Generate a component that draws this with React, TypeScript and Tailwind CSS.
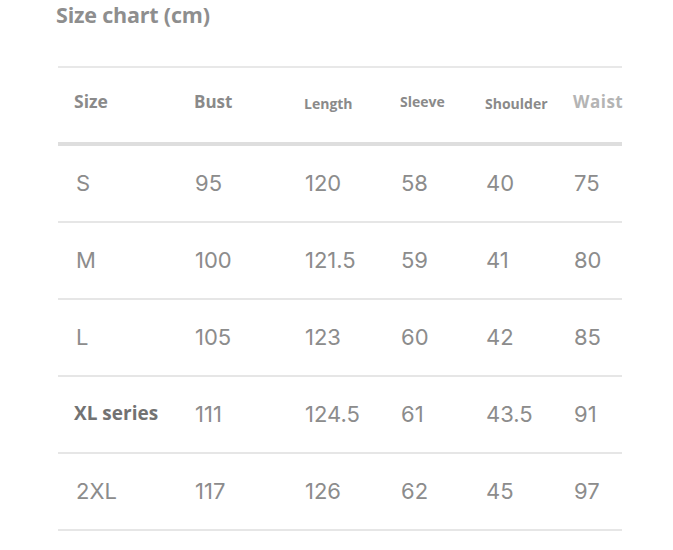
import React from "react";

const rows = [
  { size: "S", vals: ["95", "120", "58", "40", "75"] },
  { size: "M", vals: ["100", "121.5", "59", "41", "80"] },
  { size: "L", vals: ["105", "123", "60", "42", "85"] },
  { size: "XL series", vals: ["111", "124.5", "61", "43.5", "91"], bold: true },
  { size: "2XL", vals: ["117", "126", "62", "45", "97"] },
];

const cols = "grid grid-cols-[120px_110px_96px_85px_88px_1fr] items-center pl-4";

export default function App() {
  return (
    <div className="w-[673px] h-[550px] bg-white overflow-hidden font-['Open_Sans',sans-serif]">
      <div className="pl-[56px] pt-[1px] text-[21.5px] font-bold text-[#8e8e8e] leading-[28px] tracking-[-0.2px]">
        Size chart (cm)
      </div>
      <div className="ml-[58px] w-[564px] mt-[37px]">
        <div className="h-[2px] bg-[#e8e8e8]" />
        <div className={`${cols} h-[74px] pb-[7px] font-bold text-[#8a8a8a]`}>
          <span className="text-[17.5px]">Size</span>
          <span className="text-[17px]">Bust</span>
          <span className="text-[14px] pt-[3px]">Length</span>
          <span className="text-[14px]">Sleeve</span>
          <span className="text-[14px] pt-[3px]">Shoulder</span>
          <span className="text-[17px] text-[#b4b4b4] tracking-[0.5px]">Waist</span>
        </div>
        <div className="h-[4px] bg-[#dedede]" />
        {rows.map((r) => (
          <div key={r.size}>
            <div className={`${cols} h-[75px] font-['Inter',sans-serif] text-[22px] text-[#8c8c8c]`}>
              {r.bold ? (
                <span className="font-['Open_Sans',sans-serif] font-bold text-[19px] text-[#727272] -mt-[3px]">
                  {r.size}
                </span>
              ) : (
                <span className="pl-[2px]">{r.size}</span>
              )}
              {r.vals.map((v, i) => (
                <span key={i} className="pl-[1px]">
                  {v}
                </span>
              ))}
            </div>
            <div className="h-[2px] bg-[#e6e6e6]" />
          </div>
        ))}
      </div>
    </div>
  );
}
